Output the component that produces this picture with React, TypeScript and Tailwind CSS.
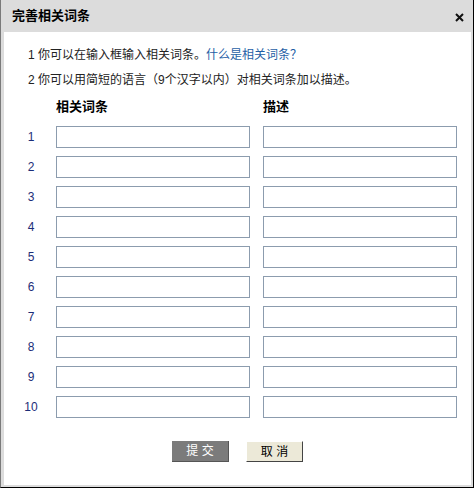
const rows = [1, 2, 3, 4, 5, 6, 7, 8, 9, 10];

export default function App() {
    return (
        <div
            className="w-[474px] h-[488px] bg-[#dcdcdc] border-l border-r border-b border-l-[#7a7a7a] border-r-black border-b-black flex flex-col text-[12px] text-[#222]"
            style={{ fontFamily: '"Liberation Sans", "Noto Sans CJK SC", sans-serif' }}
        >
            {/* Title bar */}
            <div className="h-[32px] flex items-center justify-between pl-[11px] pr-[9px] shrink-0">
                <span className="font-bold text-[13px] text-black">完善相关词条</span>
                <svg width="9" height="9" viewBox="0 0 9 9" aria-hidden="true" className="mt-[2px]">
                    <path d="M1 1L8 8M8 1L1 8" stroke="#111" strokeWidth={2} />
                </svg>
            </div>

            {/* Body */}
            <div className="flex-1 bg-white ml-[3px] mr-[2px] mb-[2px] pt-[13px] pl-[15px] flex flex-col">
                <div className="pl-[9px] leading-[20px]">
                    1 你可以在输入框输入相关词条。<span className="text-[#1f5fa6]">什么是相关词条？</span>
                </div>
                <div className="pl-[9px] leading-[20px] mt-[5px]">
                    2 你可以用简短的语言（9个汉字以内）对相关词条加以描述。
                </div>

                <div className="flex mt-[7px] leading-[20px] font-bold text-[13px] text-black">
                    <span className="w-[37px]"></span>
                    <span className="w-[207px]">相关词条</span>
                    <span>描述</span>
                </div>

                <div className="flex flex-col gap-[8px] mt-[9px]">
                    {rows.map((n) => (
                        <div key={n} className="flex items-center h-[22px]">
                            <span className="w-[24px] text-center text-[#1c2d78] text-[12px]">{n}</span>
                            <input
                                type="text"
                                className="ml-[13px] w-[194px] h-[22px] border border-[#8c9cae] bg-white outline-none"
                            />
                            <input
                                type="text"
                                className="ml-[13px] w-[194px] h-[22px] border border-[#8c9cae] bg-white outline-none"
                            />
                        </div>
                    ))}
                </div>

                <div className="flex justify-center gap-[17px] mt-[23px] pr-[15px]">
                    <button className="w-[57px] h-[21px] bg-[#7b7b7b] text-white text-[12px] leading-none border-b border-r border-[#555]">
                        提&nbsp;交
                    </button>
                    <button className="w-[57px] h-[21px] bg-[#ece9d8] text-black text-[12px] leading-none border-t border-l border-t-white border-l-white border-b border-r border-b-[#444] border-r-[#444]">
                        取&nbsp;消
                    </button>
                </div>
            </div>
        </div>
    );
}
